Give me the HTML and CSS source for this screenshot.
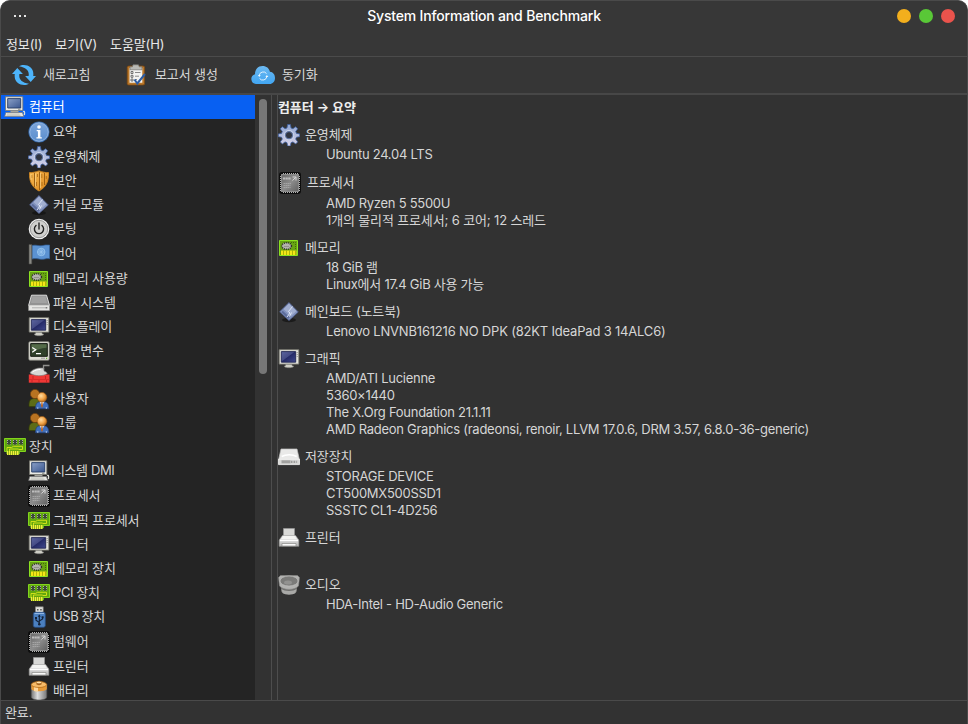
FILE: index.html
```html
<!DOCTYPE html>
<html lang="ko">
<head>
<meta charset="utf-8">
<title>System Information and Benchmark</title>
<link rel="stylesheet" href="styles.css">
</head>
<body>
<svg class="sprites" aria-hidden="true">
  <defs>
    <linearGradient id="g-screen" x1="0" y1="0" x2="1" y2="1"><stop offset="0" stop-color="#8aa0c8"/><stop offset="1" stop-color="#3a568e"/></linearGradient>
    <linearGradient id="g-navy" x1="0" y1="0" x2="1" y2="1"><stop offset="0" stop-color="#5d669f"/><stop offset=".45" stop-color="#454c86"/><stop offset=".5" stop-color="#252b68"/><stop offset="1" stop-color="#414a8e"/></linearGradient>
    <linearGradient id="g-info" x1="0" y1="0" x2="0" y2="1"><stop offset="0" stop-color="#7ba4da"/><stop offset="1" stop-color="#5b8fce"/></linearGradient>
    <linearGradient id="g-gear" x1="0" y1="0" x2="0" y2="1"><stop offset="0" stop-color="#8fa6d2"/><stop offset="1" stop-color="#dcd6ea"/></linearGradient>
    <linearGradient id="g-wood" x1="0" y1="0" x2="1" y2="1"><stop offset="0" stop-color="#f9bd55"/><stop offset="1" stop-color="#d9851b"/></linearGradient>
    <linearGradient id="g-metal" x1="0" y1="0" x2="0" y2="1"><stop offset="0" stop-color="#f5f5f5"/><stop offset="1" stop-color="#b5b5b5"/></linearGradient>
    <linearGradient id="g-grey" x1="0" y1="0" x2="1" y2="0"><stop offset="0" stop-color="#777"/><stop offset=".4" stop-color="#ddd"/><stop offset="1" stop-color="#777"/></linearGradient>
    <linearGradient id="g-chip" x1="0" y1="0" x2="1" y2="1"><stop offset="0" stop-color="#666"/><stop offset=".5" stop-color="#8c8c8c"/><stop offset="1" stop-color="#606060"/></linearGradient>
    <linearGradient id="g-cloud" x1="0" y1="0" x2="0" y2="1"><stop offset="0" stop-color="#6bb8f0"/><stop offset="1" stop-color="#42a6f2"/></linearGradient>
    <radialGradient id="g-orange" cx=".4" cy=".35" r=".7"><stop offset="0" stop-color="#ffdca0"/><stop offset=".55" stop-color="#f0a448"/><stop offset="1" stop-color="#a85c10"/></radialGradient>
  </defs>

  <symbol id="computer" viewBox="0 0 22 22">
    <path d="M1.500.8h17.300v13.700H1.500z" fill="#e9e9e4" stroke="#77776f" stroke-width=".8"/>
    <path d="M3.700 2.600h13v9.400h-13z" fill="url(#g-screen)" stroke="#263d66" stroke-width=".9"/>
    <path d="M14 13.300h2.500" stroke="#7b7b75" stroke-width=".8"/>
    <path d="M6.500 14.800h8v1.700h-8z" fill="#a5a59e"/>
    <path d="M1.800 16.500h16.600l1.400 4H.7z" fill="#e8e8e3" stroke="#777" stroke-width=".7"/>
    <path d="M3 18h12.500M2.500 19.300h14" stroke="#b2b2aa" stroke-width=".7"/>
    <path d="M19 15.500c2-1 1.600 2 1.400 3.600" fill="none" stroke="#deded8" stroke-width="1.300"/>
  </symbol>

  <symbol id="info" viewBox="0 0 22 22">
    <circle cx="11" cy="11" r="10.600" fill="#3266a8"/>
    <circle cx="11" cy="11" r="9.300" fill="url(#g-info)" stroke="#a6c3e7" stroke-width=".8"/>
    <circle cx="11" cy="6" r="1.800" fill="#fff"/>
    <path d="M8.700 9h3.700v7.200h1.400v1.200H8.400v-1.200h1.500v-6H8.700z" fill="#fff"/>
  </symbol>

  <symbol id="gear" viewBox="0 0 22 22">
    <path d="M9.600.5h2.800l.6 3.400 1.900.8 2.800-2 2 2.100-2 2.700.8 1.900 3.200.5v2.800l-3.200.5-.8 1.900 2 2.800-2 2-2.800-2-1.900.8-.6 3.300H9.600L9 18.700l-1.900-.8-2.700 2-2.100-2 2-2.800-.8-1.900-3.200-.5V9.900l3.200-.5.8-1.900-2-2.700 2.100-2.100 2.700 2L9 3.900z" fill="url(#g-gear)" stroke="#3e5f9f" stroke-width=".8"/>
    <circle cx="11" cy="11.200" r="4.800" fill="none" stroke="#c9d3ea" stroke-width="1"/>
    <circle cx="11" cy="11.200" r="3.600" fill="#2f3440" stroke="#5f75a5" stroke-width="1"/>
  </symbol>

  <symbol id="shield" viewBox="0 0 22 22">
    <path d="M1.500 2.600C4.500 2.800 7.500 2 11 .9c3.500 1.100 6.500 1.900 9.500 1.700C20.800 11 18.500 17 11 21 3.500 17 1.200 11 1.500 2.600z" fill="url(#g-wood)" stroke="#c98322" stroke-width="1"/>
    <path d="M6.500 3v14M11.500 2v18M16.500 3v12" stroke="#93580f" stroke-width=".9"/>
    <path d="M3.800 5v3M8.500 12v4M9.500 4v3M13.800 4v4M14 12v4M18.300 6v3" stroke="#a96a15" stroke-width=".8"/>
    <path d="M7.500 3.500v13M12.500 3v15M3 4v6" stroke="#fbd58c" stroke-width=".7"/>
  </symbol>

  <symbol id="module" viewBox="0 0 22 22">
    <ellipse cx="11" cy="19" rx="7" ry="2.200" fill="#111" opacity=".7"/>
    <path d="M11 1.500 20.300 11 11 19.500 1.600 10.800z" fill="#8292bd" stroke="#4e5d8b" stroke-width=".8"/>
    <path d="M11 2.500 18.500 10 13 15 5.500 8z" fill="#a9b5d5" opacity=".8"/>
    <path d="m4 10.500 7 6.500" stroke="#5d6d9c" stroke-width="2.200"/>
    <path d="m14.500 5.500-4 5 1.500 1.500-3 4M13.500 11.500l-2 4" fill="none" stroke="#dde4f5" stroke-width="1"/>
  </symbol>

  <symbol id="power" viewBox="0 0 22 22">
    <circle cx="11" cy="11" r="10.300" fill="#f0f0f0"/>
    <circle cx="11" cy="11" r="8.700" fill="#d0d0ce" stroke="#888" stroke-width=".8"/>
    <path d="M8 7.500a4.600 4.600 0 1 0 6 0M11 5v6" fill="none" stroke="#222" stroke-width="1.400" stroke-linecap="round"/>
  </symbol>

  <symbol id="flag" viewBox="0 0 22 22">
    <path d="M4 2.500c4-1.200 7 1 11 0 2.500-.7 4-.6 6.700-.4v13.600c-4-.6-5 .9-8.700.6-3-.2-5-1.300-9-.3z" fill="#5b92d2" stroke="#315e99" stroke-width=".7"/>
    <circle cx="13.200" cy="9" r="3.800" fill="#70a5de" stroke="#9bc6ef" stroke-width=".8"/>
    <path d="M9.500 9h7.400M13.200 5.500v7M11 6.500l4.500 5M15.400 6.500l-4.500 5" stroke="#a7cef2" stroke-width=".5"/>
    <path d="M1 1.500h2.800V21H1z" fill="#898983" stroke="#4a4a46" stroke-width=".6"/>
  </symbol>

  <symbol id="memory" viewBox="0 0 22 22">
    <path d="M1.500 3.500h18v15h-18z" fill="#67a313" stroke="#8be220" stroke-width="1"/>
    <path d="M3 13.500h15.500V18H3z" fill="#f4e616"/>
    <path d="M5.500 13.300V18M8.500 13.300V18M11.500 13.300V18M14.500 13.300V18M17.500 13.300V18" stroke="#9da707" stroke-width=".8"/>
    <path d="M13 5.500h4.500V12" fill="none" stroke="#3e6e06" stroke-dasharray="1 1"/>
    <ellipse cx="8.600" cy="9" rx="4.800" ry="3.300" fill="#b3b3ad" stroke="#2b2b25" stroke-width="1.500" stroke-dasharray="1 1"/>
    <path d="M6 9.500h5" stroke="#8a8a83" stroke-width=".8"/>
  </symbol>

  <symbol id="drive" viewBox="0 0 22 22">
    <path d="M3.500 3.200h15l3 10.300H.6z" fill="#929292" stroke="#dedede" stroke-width="1"/>
    <path d="M4.500 4.500h13l1.500 6.500H3z" fill="#a2a2a2"/>
    <path d="M.6 13h20.900v5.500H.6z" fill="#e5e5e3" stroke="#9c9c9a" stroke-width=".6"/>
    <path d="M4 15.800h13" stroke="#b0b0ae" stroke-width="1"/><path d="M17.500 15h1.800v1.500h-1.800z" fill="#777"/>
  </symbol>

  <symbol id="monitor" viewBox="0 0 22 22">
    <path d="M1.200 1.700h19.600v14.400H1.200z" fill="#e4e4dc" stroke="#76766d" stroke-width=".8"/>
    <path d="M3.300 3.600h14.400v10.600H3.300z" fill="url(#g-navy)" stroke="#202654" stroke-width=".9"/>
    <path d="M19.200 4v1M19.200 6v1M19.200 8v1" stroke="#777" stroke-width=".8"/>
    <path d="M7.500 16.300h6.500v1.200l2 .8c-1.500 2-8.500 2-10 0l1.500-.8z" fill="#cfcfc6" stroke="#666" stroke-width=".5"/>
  </symbol>

  <symbol id="terminal" viewBox="0 0 22 22">
    <rect x=".8" y="1.700" width="20.400" height="18.500" rx="1.200" fill="#deded6" stroke="#85857d" stroke-width=".7"/>
    <path d="M2.700 3.600h16.600v12.700H2.700z" fill="#30412b" stroke="#161c13" stroke-width="1"/>
    <path d="M3.500 4.300h15v3.500c-6 0-9 3-15 3z" fill="#5c7650" opacity=".8"/>
    <path d="m4.200 7.500 3.500 2.300-3.500 2.400M8 13.600h5" fill="none" stroke="#fff" stroke-width="1.300"/>
    <path d="M13 18.200h4" stroke="#999"/><path d="M18 17.700h1.200v1.200H18z" fill="#70b33c"/>
  </symbol>

  <symbol id="devel" viewBox="0 0 22 22">
    <path d="M.8 10.500h20.700v8.200H.8z" fill="#f03836"/>
    <path d="M5 12v3M17.500 12v3M4 16v2.500M11 16v2.500M18.500 16v2.500" stroke="#b81c1c" stroke-width=".7"/>
    <path d="M.8 15.500h20.700" stroke="#c92424" stroke-width=".6"/>
    <path d="M2 9c1-2.500 5-4.500 9-5h5v3c2 .8 3 1.500 3.300 2.500-4 3-13 3-17.300-.5z" fill="#d6d6d4" stroke="#777" stroke-width=".6"/>
    <path d="M15.500 5.500v-4h6" fill="none" stroke="#8e8e8c" stroke-width="1.300"/>
    <path d="M4.500 8c2-1.700 5-2.500 8-2.500" fill="none" stroke="#fff" stroke-width="1"/>
  </symbol>

  <symbol id="users" viewBox="0 0 22 22">
    <path d="M1 18.500c-.3-5 .8-8 5.500-8s5.500 3 5.500 8z" fill="#5d6c17" stroke="#343e07" stroke-width=".7"/>
    <circle cx="7" cy="6" r="4.600" fill="#b87321" stroke="#704110" stroke-width=".8"/>
    <path d="M7.500 20.800c0-5 1.300-7.300 6.500-7.300s6.800 2.300 6.800 7.300z" fill="#416fba" stroke="#223f79" stroke-width=".7"/>
    <path d="m11.500 13.500 2.400 4.500 2.500-4.500z" fill="#f4f4f4"/>
    <path d="m13.400 14.500-.4 3.500 1 2 1-2-.5-3.500z" fill="#b96220"/>
    <path d="M9.800 19v2M18.300 19v2" stroke="#b6cced" stroke-width=".8"/>
    <circle cx="14" cy="9.300" r="4.800" fill="url(#g-orange)" stroke="#a55c14" stroke-width=".6"/>
  </symbol>

  <symbol id="card" viewBox="0 0 22 22">
    <path d="M.5 2.500h21v13h-6.300V18H3v-2.500H.5z" fill="#61a70e" stroke="#82d51d" stroke-width="1"/>
    <path d="M3 4h4v4.500H3zM9 4h4v4.500H9zM15 4h4v4.500h-4z" fill="#3a4a35"/>
    <path d="M3.500 4v4.500M6.500 4v4.500M9.500 4v4.500M12.500 4v4.500M15.500 4v4.500M18.500 4v4.500" stroke="#a9aaa5" stroke-width="1" stroke-dasharray="1 1"/>
    <path d="M3 15.200V11.500h4.500l2-1.200h9v3.200h-4M5.500 15v-2h9" fill="none" stroke="#dbe51c" stroke-width=".9"/>
    <path d="M3 15h11.500v4H3z" fill="#eff03c"/>
    <path d="M4.500 15v4M6.500 15v4M8.500 15v4M10.500 15v4M12.500 15v4" stroke="#6c960f" stroke-width=".7"/>
  </symbol>

  <symbol id="chip" viewBox="0 0 24 24">
    <rect x="1" y="1" width="22" height="22" rx="3" fill="#0d0d0d"/>
    <path d="M5 2.500h15M5 21.500h15M2.500 5v15M21.500 5v15" stroke="#b4b4b4" stroke-width="1" stroke-dasharray="1 1"/>
    <path d="M3 3h18v18H3z" fill="url(#g-chip)"/>
    <path d="M3.500 3.500h17v17h-17z" fill="none" stroke="#8d8d8d"/>
    <path d="M5 7.500h8" stroke="#bdbdbd" stroke-width="1.800" stroke-dasharray="2.200 .4"/>
    <path d="M14.500 6H18v3.500M17.500 6.500l-3 3" fill="none" stroke="#ddd" stroke-width=".9"/>
    <path d="M5.500 12.500h8M5.500 14.500h7M5.500 16.500h7" stroke="#adadad" stroke-width=".8" stroke-dasharray="1.500 .5"/>
  </symbol>

  <symbol id="usb" viewBox="0 0 22 22">
    <path d="M7.500.8h7.700v6H7.500z" fill="#dededb" stroke="#858582" stroke-width=".7"/>
    <path d="M9 3h1.500v1.500H9zM12.200 3h1.500v1.500h-1.500z" fill="#555"/>
    <rect x="5.300" y="6.300" width="12" height="15" rx="1.800" fill="#4b80c0" stroke="#264c84" stroke-width=".8"/>
    <path d="M6.600 7.500h9.400" stroke="#91b6e3"/>
    <path d="M11.300 19V9.500M11.300 16.500 8 14.200V12M11.300 15l3.300-2v-2" fill="none" stroke="#14233a" stroke-width="1.100"/>
    <path d="m9.800 10.700 1.500-2.200 1.500 2.200zM7 11h2v2H7zM13.600 10.200h2v2h-2z" fill="#14233a"/><circle cx="11.300" cy="18.300" r="1.300" fill="#14233a"/>
  </symbol>

  <symbol id="printer" viewBox="0 0 22 22">
    <path d="M5.500 1.500h11v9h-11z" fill="#d8d8d6" stroke="#999" stroke-width=".7"/>
    <path d="M4.500 8.500h13L20.800 13v6.300H1.200V13z" fill="url(#g-metal)" stroke="#9b9b99" stroke-width=".6"/>
    <path d="M5.500 9h11l2 3h-15z" fill="#f3f3f1"/>
    <path d="M2 13.500h18" stroke="#fff" stroke-width="1.300"/>
    <path d="M4 19v-2.500h14V19z" fill="#fafafa" stroke="#898987" stroke-width=".7"/>
  </symbol>

  <symbol id="battery" viewBox="0 0 22 22">
    <path d="M3.300 4.500v12.500c0 4 15.500 4 15.500 0V4.500z" fill="url(#g-grey)" stroke="#555" stroke-width=".6"/>
    <path d="M3.300 4.500v4.500c1 3 14.500 3 15.500 0V4.500z" fill="#e69a39"/>
    <path d="M6 6.500v4.500c1.500.5 3 .6 4 .5v-5z" fill="#ffd79b"/>
    <ellipse cx="11" cy="4.500" rx="7.700" ry="3" fill="#f7bb68" stroke="#af6611" stroke-width=".7"/>
    <path d="M8.400 2.800v1.300c0 1.500 5.200 1.500 5.200 0V2.800" fill="#a8641b"/><ellipse cx="11" cy="2.500" rx="2.700" ry="1.300" fill="#ffe0a7" stroke="#9a5a16" stroke-width=".6"/>
  </symbol>

  <symbol id="storage" viewBox="0 0 22 22">
    <path d="M3 3h16l2.500 11H.5z" fill="#e9e9e8" stroke="#c3c3c1" stroke-width=".7"/>
    <path d="M3.700 10.500c4-2.500 11-2.500 15 0" fill="none" stroke="#fff" stroke-width="1.500"/>
    <path d="M.5 13.300h21v5.300H.5z" fill="#d9d9d7" stroke="#f4f4f3" stroke-width=".8"/>
    <path d="M3.500 14.300h9v3h-9z" fill="#a1a19f"/><path d="M13 15.800h6.500" stroke="#8d8d8b" stroke-width="2.300" stroke-dasharray=".8 .8"/>
  </symbol>

  <symbol id="audio" viewBox="0 0 22 22">
    <path d="M3 11h16v6c-1 4-15 4-16 0z" fill="#6e6e6c"/>
    <path d="M3.500 15c3 2.500 12 2.500 15 0l-1 4c-3 2.300-10 2.300-13 0z" fill="#a9a9a7"/>
    <path d="M2.500 1.500h17l2 2-1 8.500c-4 4.500-15 4.500-19 0L.5 3.500z" fill="#b2b2b0" stroke="#858583" stroke-width=".6"/>
    <ellipse cx="11" cy="7" rx="9" ry="5" fill="#7b7b79" stroke="#bdbdbb" stroke-width=".7"/>
    <ellipse cx="10" cy="8.500" rx="4" ry="2" fill="#929290"/>
  </symbol>

  <symbol id="refresh" viewBox="0 0 24 22">
    <path d="M7 2.300C12.500-1 22.800 2 21.200 12H24l-5.300 6-5.600-6h3.500C17.500 7 14.500 3.500 7 2.300z" fill="#4db4fa"/>
    <path d="M17 19.700C11.500 23 1.200 20 2.800 10H0l5.300-6 5.600 6H7.400C6.500 15 9.500 18.500 17 19.700z" fill="#4db4fa"/>
  </symbol>

  <symbol id="report" viewBox="0 0 22 22">
    <rect x="2.200" y="2" width="17.400" height="19" rx="1.500" fill="#b9772a" stroke="#7b4710" stroke-width=".8"/>
    <path d="M4.500 4h12.800v14.800H4.500z" fill="#f3f3f1"/>
    <path d="M8 .8h5.500l.7 2H17v3H5v-3h2.400z" fill="#b9b9b5" stroke="#73736f" stroke-width=".7"/>
    <path d="M6 7.500h2v2H6zM6 11.300h2v2H6zM6 15h2v2H6z" fill="none" stroke="#555" stroke-width=".8"/>
    <path d="M10 8.500h5.500M10 12.200h4M10 15.500h2" stroke="#888"/>
    <path d="m9.500 15.500 2.800 4 7.700-9.500" fill="none" stroke="#2d5ca2" stroke-width="2"/>
  </symbol>

  <symbol id="cloud" viewBox="0 0 24 18">
    <path d="M5 18a5 5 0 0 1-1-9.800C4 3.500 7 0 11.500 0c4 0 6.700 2.300 7.400 5.800C22 6 24 8.700 24 12c0 3.600-2.300 6-5.500 6z" fill="url(#g-cloud)"/>
    <path d="M8.200 9.500a4.100 4.100 0 0 1 7.300-2M15.900 10.500a4.100 4.100 0 0 1-7.300 2" fill="none" stroke="#eef8ff" stroke-width=".9"/>
    <path d="m6.900 9 1.400 2L9.700 9zM14.400 11l1.500-2 1.500 2z" fill="#eef8ff"/>
  </symbol>
</svg>

<div class="window">
  <header class="titlebar">
    <div class="dots"><i></i><i></i><i></i></div>
    <h1>System Information and Benchmark</h1>
    <div class="controls"><i class="minimize"></i><i class="maximize"></i><i class="close"></i></div>
  </header>
  <nav class="menubar"><span>정보(I)</span><span>보기(V)</span><span>도움말(H)</span></nav>
  <div class="toolbar">
    <div class="tool tool-refresh"><svg><use href="#refresh"/></svg><span>새로고침</span></div>
    <div class="tool tool-report"><svg><use href="#report"/></svg><span>보고서 생성</span></div>
    <div class="tool tool-sync"><svg><use href="#cloud"/></svg><span>동기화</span></div>
  </div>

  <main class="panes">
    <aside class="sidebar">
      <ul class="tree">
        <li class="root selected"><svg><use href="#computer"/></svg>컴퓨터</li>
        <li class="tall"><svg><use href="#info"/></svg>요약</li>
        <li><svg><use href="#gear"/></svg>운영체제</li>
        <li><svg><use href="#shield"/></svg>보안</li>
        <li><svg><use href="#module"/></svg>커널 모듈</li>
        <li><svg><use href="#power"/></svg>부팅</li>
        <li class="tall"><svg><use href="#flag"/></svg>언어</li>
        <li><svg><use href="#memory"/></svg>메모리 사용량</li>
        <li><svg><use href="#drive"/></svg>파일 시스템</li>
        <li><svg><use href="#monitor"/></svg>디스플레이</li>
        <li><svg><use href="#terminal"/></svg>환경 변수</li>
        <li><svg><use href="#devel"/></svg>개발</li>
        <li><svg><use href="#users"/></svg>사용자</li>
        <li><svg><use href="#users"/></svg>그룹</li>
        <li class="root"><svg><use href="#card"/></svg>장치</li>
        <li class="latin"><svg><use href="#computer"/></svg>시스템 DMI</li>
        <li class="tall"><svg class="wide"><use href="#chip"/></svg>프로세서</li>
        <li><svg><use href="#card"/></svg>그래픽 프로세서</li>
        <li><svg><use href="#monitor"/></svg>모니터</li>
        <li><svg><use href="#memory"/></svg>메모리 장치</li>
        <li class="latin"><svg><use href="#card"/></svg>PCI 장치</li>
        <li class="latin"><svg><use href="#usb"/></svg>USB 장치</li>
        <li class="tall"><svg class="wide"><use href="#chip"/></svg>펌웨어</li>
        <li><svg><use href="#printer"/></svg>프린터</li>
        <li><svg><use href="#battery"/></svg>배터리</li>
      </ul>
      <div class="scrollbar"><div class="thumb"></div></div>
    </aside>
    <section class="details">
      <h2>컴퓨터 → 요약</h2>
      <section class="group">
        <h3><svg><use href="#gear"/></svg>운영체제</h3>
        <p>Ubuntu 24.04 LTS</p>
      </section>
      <section class="group cpu">
        <h3><svg><use href="#chip"/></svg>프로세서</h3>
        <p>AMD Ryzen 5 5500U</p>
        <p class="mixed">1개의 물리적 프로세서; 6 코어; 12 스레드</p>
      </section>
      <section class="group">
        <h3><svg><use href="#memory"/></svg>메모리</h3>
        <p>18 GiB 램</p>
        <p>Linux에서 17.4 GiB 사용 가능</p>
      </section>
      <section class="group">
        <h3><svg><use href="#module"/></svg>메인보드 (노트북)</h3>
        <p class="model">Lenovo LNVNB161216 NO DPK (82KT IdeaPad 3 14ALC6)</p>
      </section>
      <section class="group">
        <h3><svg><use href="#monitor"/></svg>그래픽</h3>
        <p>AMD/ATI Lucienne</p>
        <p>5360×1440</p>
        <p>The X.Org Foundation 21.1.11</p>
        <p>AMD Radeon Graphics (radeonsi, renoir, LLVM 17.0.6, DRM 3.57, 6.8.0-36-generic)</p>
      </section>
      <section class="group">
        <h3><svg><use href="#storage"/></svg>저장장치</h3>
        <p>STORAGE DEVICE</p>
        <p>CT500MX500SSD1</p>
        <p>SSSTC CL1-4D256</p>
      </section>
      <section class="group">
        <h3><svg><use href="#printer"/></svg>프린터</h3>
        <p></p>
      </section>
      <section class="group">
        <h3><svg><use href="#audio"/></svg>오디오</h3>
        <p>HDA-Intel - HD-Audio Generic</p>
      </section>
    </section>
  </main>
  <footer class="statusbar">완료.</footer>
</div>
</body>
</html>
```
FILE: styles.css
```css
* { box-sizing: border-box; margin: 0; padding: 0; }

body {
  background: #fff;
  color: #d6d6d6;
  font: 13px/17px Inter, "Noto Sans CJK KR", sans-serif;
  letter-spacing: -.12px;
  overflow: hidden;
}

.sprites { position: absolute; width: 0; height: 0; }

.window {
  display: flex;
  flex-direction: column;
  width: 968px;
  height: 724px;
  background: #323232;
  border: 1px solid #4a4a4a;
  border-bottom: 0;
  border-radius: 10px 10px 0 0;
  overflow: hidden;
}

.titlebar {
  display: grid;
  grid-template-columns: 100px 1fr 100px;
  align-items: center;
  height: 30px;
  background: #373737;
}
.titlebar h1 { padding-bottom: 1px; text-align: center; font-size: 14px; font-weight: 500; letter-spacing: -.17px; color: #fff; }
.dots { display: flex; gap: 3px; padding-left: 13px; }
.dots i { width: 2px; height: 2px; background: #e6e6e6; }
.controls { display: flex; justify-content: flex-end; gap: 8px; padding-right: 12px; }
.controls i { width: 14px; height: 14px; border-radius: 50%; }
.minimize { background: #f3af1d; }
.maximize { background: #59c837; }
.close { background: #ea534c; }

.menubar {
  display: flex;
  gap: 13px;
  height: 25px;
  padding: 5px 5px 0;
  background: #373737;
  color: #e8e8e8;
}

.toolbar {
  display: flex;
  align-items: center;
  height: 37px;
  padding-left: 11px;
  background: #363636;
  border-top: 1px solid #4b4b4b;
}
.tool { display: flex; align-items: center; }
.tool span { padding-bottom: 2px; }
.tool svg { width: 24px; height: 22px; margin-right: 7px; }
.tool-refresh { width: 113px; }
.tool-report { width: 126px; }
.tool-report svg { width: 22px; margin-right: 8px; }
.tool-sync svg { height: 18px; }

.panes {
  display: flex;
  flex: 1;
  min-height: 0;
  border-top: 2px solid #474747;
}

.sidebar { display: flex; width: 271px; border-right: 1px solid #4d4d4d; }
.tree { width: 254px; background: #242424; list-style: none; overflow: hidden; }
.tree li {
  display: flex;
  align-items: center;
  height: 24px;
  padding: 0 0 2px 27px;
  white-space: nowrap;
}
.tree .tall { height: 26px; }
.tree .root { padding-left: 3px; }
.tree .latin { letter-spacing: -.4px; }
.tree .selected { background: #0860f2; color: #fff; }
.tree svg { flex: none; width: 22px; height: 22px; margin: 2px 3px 0 0; }
.tree .wide { width: 24px; height: 24px; margin: 2px 2px 0 -1px; }

.scrollbar { width: 16px; padding: 4px; background: #323232; }
.thumb { width: 8px; height: 275px; border-radius: 4px; background: #777; }

.details {
  flex: 1;
  margin-left: 5px;
  border-left: 1px solid #4d4d4d;
  background: #323232;
}
.details h2 { height: 28px; padding-top: 4px; font-size: 13px; line-height: 17px; font-weight: 600; color: #eee; }
.group { margin-bottom: 7px; }
.group h3 { display: flex; align-items: center; height: 23px; font-size: 13px; font-weight: 400; }
.group svg { width: 22px; height: 22px; margin-right: 5px; }
.group p { height: 17px; padding-left: 48px; letter-spacing: -.27px; }
.group .mixed { letter-spacing: -.15px; }
.group .model { letter-spacing: -.19px; }
.cpu h3 { height: 25px; }
.cpu svg { width: 24px; height: 24px; }

.statusbar { height: 24px; padding: 3px 4px 0; background: #323232; border-top: 1px solid #4a4a4a; }
```
